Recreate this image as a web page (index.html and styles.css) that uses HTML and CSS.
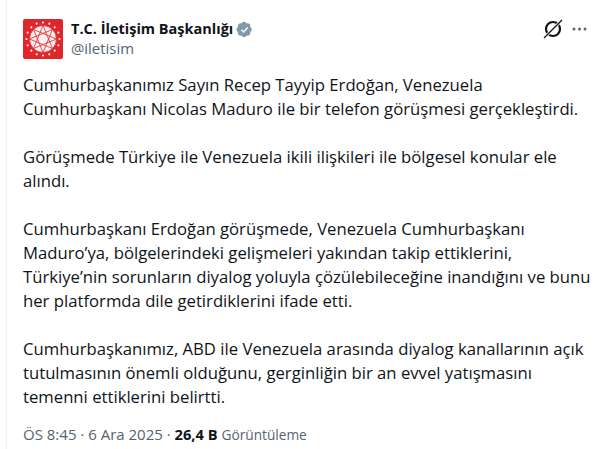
FILE: index.html
```html
<!DOCTYPE html>
<html lang="tr">

<head>
    <meta charset="UTF-8">
    <title>T.C. İletişim Başkanlığı</title>
    <link rel="stylesheet" href="styles.css">
</head>

<body>
    <article class="post">
        <header class="post-head">
            <svg class="avatar" viewBox="0 0 40 40">
                <rect width="40" height="40" rx="2" fill="#e0262b" />
                <circle cx="20" cy="20" r="13.5" fill="#fbeeee" />
                <g fill="none" stroke="#e0262b" stroke-width="0.8">
                    <circle cx="20" cy="20" r="13.5" />
                    <path d="M20 6.5 29.5 29.5M20 6.5 10.500 29.500M33.500 20 10.500 10.500M33.500 20 10.500 29.500M6.500 20 29.500 10.500M6.500 20 29.500 29.500M20 33.500 10.500 10.500M20 33.500 29.500 10.500" />
                </g>
                <g fill="#fbeeee">
                    <circle cx="20" cy="3.500" r="1.100" />
                    <circle cx="26.300" cy="4.700" r="1.100" />
                    <circle cx="31.700" cy="8.300" r="1.100" />
                    <circle cx="35.300" cy="13.700" r="1.100" />
                    <circle cx="36.500" cy="20" r="1.100" />
                    <circle cx="35.300" cy="26.300" r="1.100" />
                    <circle cx="31.700" cy="31.700" r="1.100" />
                    <circle cx="26.300" cy="35.300" r="1.100" />
                    <circle cx="20" cy="36.500" r="1.100" />
                    <circle cx="13.700" cy="35.300" r="1.100" />
                    <circle cx="8.300" cy="31.700" r="1.100" />
                    <circle cx="4.700" cy="26.300" r="1.100" />
                    <circle cx="3.500" cy="20" r="1.100" />
                    <circle cx="4.700" cy="13.700" r="1.100" />
                    <circle cx="8.300" cy="8.300" r="1.100" />
                    <circle cx="13.700" cy="4.700" r="1.100" />
                </g>
            </svg>
            <div class="author">
                <div class="author-name">
                    T.C. İletişim Başkanlığı
                    <svg class="badge" viewBox="0 0 22 22">
                        <path fill="#829aab" d="M20.400 11c0-1.400-.8-2.700-2-3.300.4-1.300.2-2.800-.8-3.800s-2.400-1.200-3.800-.8c-.6-1.200-1.900-2-3.300-2s-2.700.8-3.300 2c-1.300-.4-2.800-.2-3.800.8s-1.200 2.500-.8 3.800c-1.200.6-2 1.900-2 3.300s.8 2.700 2 3.300c-.4 1.300-.2 2.800.8 3.800s2.500 1.200 3.800.8c.6 1.200 1.900 2 3.300 2s2.700-.8 3.300-2c1.300.4 2.800.2 3.800-.8s1.200-2.500.8-3.800c1.200-.6 2-1.900 2-3.300z" />
                        <path fill="none" stroke="#fff" stroke-width="1.800" d="M7 11.200l2.900 2.900 5.200-5.800" />
                    </svg>
                </div>
                <div class="author-handle">@iletisim</div>
            </div>
            <div class="head-actions">
                <svg class="grok" viewBox="0 0 24 24">
                    <circle cx="12" cy="12" r="7" fill="none" stroke="#0f1419" stroke-width="2.200" />
                    <path d="M3 21 21 3" stroke="#fff" stroke-width="2.800" />
                    <path d="M3 21 21 3" stroke="#0f1419" stroke-width="1.200" />
                </svg>
                <svg class="more" viewBox="0 0 15 4">
                    <circle cx="2" cy="2" r="1.500" />
                    <circle cx="7.500" cy="2" r="1.500" />
                    <circle cx="13" cy="2" r="1.500" />
                </svg>
            </div>
        </header>

        <div class="post-text">
            <p>Cumhurbaşkanımız Sayın Recep Tayyip Erdoğan, Venezuela<br>Cumhurbaşkanı Nicolas Maduro ile bir telefon görüşmesi gerçekleştirdi.</p>
            <p>Görüşmede Türkiye ile Venezuela ikili ilişkileri ile bölgesel konular ele<br>alındı.</p>
            <p>Cumhurbaşkanı Erdoğan görüşmede, Venezuela Cumhurbaşkanı<br>Maduro’ya, bölgelerindeki gelişmeleri yakından takip ettiklerini,<br>Türkiye’nin sorunların diyalog yoluyla çözülebileceğine inandığını ve bunu<br>her platformda dile getirdiklerini ifade etti.</p>
            <p>Cumhurbaşkanımız, ABD ile Venezuela arasında diyalog kanallarının açık<br>tutulmasının önemli olduğunu, gerginliğin bir an evvel yatışmasını<br>temenni ettiklerini belirtti.</p>
        </div>

        <footer class="post-meta">
            ÖS 8:45 · 6 Ara 2025 · <strong>26,4 B</strong> <span class="views">Görüntüleme</span>
        </footer>
    </article>
</body>

</html>
```

FILE: styles.css
```css
/* Global styles */
* {
    padding: 0;
    margin: 0;
    box-sizing: border-box;
}

body {
    font-family: "Open Sans", "Noto Sans", sans-serif;
    background-color: #fff;
    color: #0f1419;
    height: 449px;
    overflow: hidden;
}

.post {
    margin-left: 6px;
    height: 449px;
    padding: 19px 13px 0 16px;
    border-left: 1px solid #eff3f4;
}

/* Header */
.post-head {
    display: flex;
    align-items: flex-start;
    height: 40px;
}

.avatar {
    width: 40px;
    height: 40px;
    flex-shrink: 0;
}

.author {
    margin-left: 8px;
    flex: 1;
}

.author-name {
    display: flex;
    align-items: center;
    gap: 3px;
    font-size: 14.5px;
    font-weight: 700;
    line-height: 20px;
}

.badge {
    width: 17px;
    height: 17px;
}

.author-handle {
    font-size: 14.9px;
    line-height: 18px;
    color: #536471;
}

.head-actions {
    display: flex;
    align-items: center;
    gap: 7px;
    height: 20px;
}

.grok {
    width: 24px;
    height: 24px;
    flex-shrink: 0;
}

.more {
    width: 15px;
    height: 4px;
    fill: #536471;
}

/* Body text */
.post-text {
    margin-top: 14px;
    font-size: 16.7px;
    line-height: 24px;
    white-space: nowrap;
}

.post-text p {
    margin-bottom: 24px;
}

.post-text p:last-child {
    margin-bottom: 0;
}

/* Footer */
.post-meta {
    margin-top: 15px;
    font-size: 15px;
    line-height: 20px;
    color: #536471;
}

.post-meta strong {
    font-size: 14.67px;
    color: #0f1419;
}

.views {
    font-size: 13.7px;
}
```
